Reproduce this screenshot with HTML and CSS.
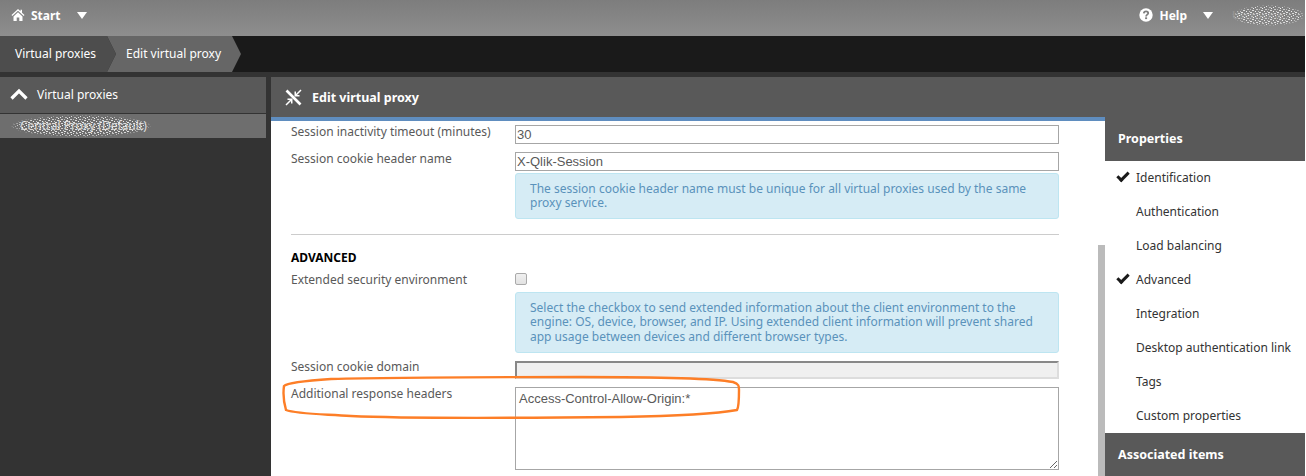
FILE: index.html
```html
<!DOCTYPE html>
<html lang="en">
<head>
  <meta charset="UTF-8">
  <title>Edit virtual proxy</title>
  <link rel="stylesheet" href="styles.css">
</head>
<body>
  <!-- top bar -->
  <header class="topbar">
    <div class="top-group">
      <svg class="home-icon" width="14" height="14" viewBox="0 0 14 14"><path fill="#fff" d="M7 1 0.5 7 1.3 7.9 7 2.7 12.7 7.9 13.5 7 11 4.7V1.8H9.5V3.3ZM2.5 8.4V13H5.7V9.4H8.3V13H11.5V8.4L7 4.3Z"/></svg>
      <span class="top-label">Start</span>
      <span class="caret caret-start"></span>
    </div>
    <div class="top-group">
      <svg class="help-icon" width="14" height="14" viewBox="0 0 14 14"><circle cx="7" cy="7" r="6.7" fill="#fff"/><path fill="none" stroke="#7f7f7f" stroke-width="1.8" d="M4.8 5.4C4.9 3.9 5.9 3.3 7 3.3 8.3 3.3 9.2 4.1 9.2 5.2 9.2 6.6 7.1 6.7 7.1 8.4"/><rect x="6.1" y="9.3" width="2" height="1.8" fill="#7f7f7f"/></svg>
      <span class="top-label">Help</span>
      <span class="caret caret-help"></span>
      <span class="user-name">
        Username
        <svg class="noise" width="73" height="21"><rect width="73" height="21" fill="url(#speckle)"/></svg>
      </span>
    </div>
  </header>

  <!-- breadcrumb -->
  <nav class="crumbs">
    <a class="crumb crumb-first">Virtual proxies</a>
    <a class="crumb crumb-current">Edit virtual proxy</a>
  </nav>

  <div class="workspace">
    <aside class="side-list">
      <div class="side-head">
        <svg width="18" height="12" viewBox="0 0 18 12"><path fill="none" stroke="#fff" stroke-width="3.2" d="M1.5 10.5 9 3 16.5 10.5"/></svg>
        <span>Virtual proxies</span>
      </div>
      <div class="side-item">
        Central Proxy (Default)
        <svg class="noise" width="142" height="22"><rect width="142" height="22" fill="url(#speckle)"/></svg>
      </div>
    </aside>

    <main class="editor">
      <div class="editor-head">
        <svg width="17" height="17" viewBox="0 0 17 17"><path fill="none" stroke="#fff" stroke-width="2.6" d="M1.5 1.5 15.5 15.5"/><path fill="none" stroke="#fff" stroke-width="1.5" d="M16 1 10.5 6.5M1 16 6.5 10.5"/><path fill="#fff" d="M9.5 2.5H11V6H14.5V7.5H9.5ZM2.5 9.5H7.5V14.5H6V11H2.5Z"/></svg>
        <span>Edit virtual proxy</span>
      </div>
      <div class="editor-body">
        <form class="form-pane">
          <div class="row">
            <label>Session inactivity timeout (minutes)</label>
            <input class="field" type="text" value="30">
          </div>
          <div class="row">
            <label>Session cookie header name</label>
            <div>
              <input class="field" type="text" value="X-Qlik-Session">
              <p class="info info-short">The session cookie header name must be unique for all virtual proxies used by the same proxy service.</p>
            </div>
          </div>
          <hr>
          <h3>ADVANCED</h3>
          <div class="row row-check">
            <label>Extended security environment</label>
            <div>
              <input class="check" type="checkbox">
              <p class="info info-long">Select the checkbox to send extended information about the client environment to the engine: OS, device, browser, and IP. Using extended client information will prevent shared app usage between devices and different browser types.</p>
            </div>
          </div>
          <div class="row row-domain">
            <label>Session cookie domain</label>
            <input class="field field-off" type="text" disabled>
          </div>
          <div class="row">
            <label>Additional response headers</label>
            <textarea class="field-area">Access-Control-Allow-Origin:*</textarea>
          </div>
        </form>

        <div class="scroll-track"><div class="scroll-thumb"></div></div>

        <div class="props">
          <div class="props-head">Properties</div>
          <ul class="props-list">
            <li class="done">Identification</li>
            <li>Authentication</li>
            <li>Load balancing</li>
            <li class="done">Advanced</li>
            <li>Integration</li>
            <li>Desktop authentication link</li>
            <li>Tags</li>
            <li>Custom properties</li>
          </ul>
          <div class="props-foot">Associated items</div>
        </div>
      </div>
    </main>
  </div>

  <!-- hand drawn marker round the headers row -->
  <svg class="marker" width="470" height="50" viewBox="0 0 470 50">
    <path fill="none" stroke="#fd7e27" stroke-width="2.4" d="M3 11C6 8 20 6 50 4 120 2 200 2 300 2 360 2 430 3 452 7 458 9 458 11 458 15 458 25 458 32 456 35 440 38 400 41 340 42 240 43 110 43 70 41 40 39 15 39 5 35 3 28 2 18 3 11Z"/>
  </svg>

  <!-- speckle used for the scrubbed names -->
  <svg class="defs" width="0" height="0">
    <defs>
      <pattern id="speckle" width="9" height="9" patternUnits="userSpaceOnUse">
        <rect x="0" y="0" width="1" height="1" fill="#ddd"/>
        <rect x="3" y="0" width="2" height="1" fill="#c4c4c4"/>
        <rect x="7" y="1" width="1" height="1" fill="#eee"/>
        <rect x="1" y="2" width="2" height="1" fill="#bbb"/>
        <rect x="5" y="2" width="1" height="1" fill="#e6e6e6"/>
        <rect x="3" y="3" width="1" height="1" fill="#f2f2f2"/>
        <rect x="6" y="4" width="2" height="1" fill="#ccc"/>
        <rect x="0" y="4" width="1" height="1" fill="#bbb"/>
        <rect x="2" y="5" width="2" height="1" fill="#ddd"/>
        <rect x="5" y="6" width="1" height="1" fill="#eee"/>
        <rect x="8" y="6" width="1" height="1" fill="#c4c4c4"/>
        <rect x="0" y="7" width="2" height="1" fill="#e6e6e6"/>
        <rect x="3" y="8" width="1" height="1" fill="#ccc"/>
        <rect x="6" y="8" width="2" height="1" fill="#ddd"/>
      </pattern>
    </defs>
  </svg>
</body>
</html>
```

FILE: styles.css
```css
/* page */
html, body { height: 476px; overflow: hidden; }
html { background: #fff; }
body { position: relative; width: 1305px; margin: 0; background: #333; color: #595959; font-family: "Noto Sans", "Liberation Sans", sans-serif; font-size: 12px; }
.noise { position: absolute; left: 0; top: 0; -webkit-mask-image: radial-gradient(closest-side, #000 85%, transparent 100%); mask-image: radial-gradient(closest-side, #000 85%, transparent 100%); }
.defs { position: absolute; }

/* top bar */
.topbar { display: flex; justify-content: space-between; align-items: center; height: 36px; padding: 0 0 6px 11px; background: linear-gradient(#7d7d7d, #8e8e8e); box-sizing: border-box; }
.top-group { display: flex; align-items: center; color: #fff; font-weight: 700; }
.top-label { font-size: 12px; }
.home-icon { margin-right: 6px; }
.help-icon { margin-right: 6px; }
.caret { width: 0; height: 0; border-left: 5px solid transparent; border-right: 5px solid transparent; border-top: 7px solid #fff; }
.caret-start { margin-left: 16px; }
.caret-help { margin-left: 16px; }
.user-name { position: relative; width: 73px; height: 21px; margin-left: 19px; line-height: 21px; color: rgba(255,255,255,0.15); font-size: 10px; overflow: hidden; }

/* breadcrumb */
.crumbs { display: flex; height: 36px; background: #1a1a1a; }
.crumb { display: flex; align-items: center; color: #fff; font-size: 12px; height: 36px; padding-bottom: 2px; box-sizing: border-box; }
.crumb-first { width: 116px; padding-left: 15px; background: #4d4d4d; clip-path: polygon(0 0, 107px 0, 116px 50%, 107px 100%, 0 100%); }
.crumb-current { width: 135px; margin-left: -9px; padding-left: 19px; background: #666; clip-path: polygon(0 0, 125px 0, 134px 50%, 125px 100%, 0 100%, 9px 50%); }

/* work area */
.workspace { display: flex; gap: 5px; height: 404px; padding-top: 5px; box-sizing: border-box; }
.side-list { width: 266px; flex: none; }
.side-head { display: flex; align-items: center; gap: 9px; height: 36px; padding: 0 0 2px 10px; background: #595959; color: #fff; font-size: 12px; box-sizing: border-box; }
.side-item { position: relative; height: 24px; margin-top: 1px; padding-left: 20px; background: #6e6e6e; color: #ddd; line-height: 24px; font-size: 12px; }
.side-item .noise { left: 10px; top: 1px; }
.editor { flex: 1; display: flex; flex-direction: column; min-width: 0; }
.editor-head { display: flex; align-items: center; gap: 10px; height: 40px; padding-left: 14px; background: #595959; color: #fff; font-weight: 700; font-size: 12.5px; box-sizing: border-box; }
.editor-body { flex: 1; display: flex; background: #fff; min-height: 0; }

/* form */
.form-pane { width: 827px; flex: none; padding: 4px 39px 0 20px; border-top: 4px solid #5f8dbf; box-sizing: border-box; }
.row { display: grid; grid-template-columns: 224px 544px; margin-bottom: 8px; }
.row label { line-height: 14px; font-size: 12px; }
.row-domain label { margin-top: -1px; }
.field { display: block; width: 544px; height: 19px; padding: 0 1px; border: 1px solid #a6a6a6; background: #fff; color: #595959; font-family: "Liberation Sans", sans-serif; font-size: 13px; box-sizing: border-box; }
.field-off { height: 18px; background: #f0f0f0; border-style: solid; border-width: 2px; border-color: #888 #ddd #ddd #888; }
.field-area { display: block; width: 544px; height: 83px; padding: 3px; border: 1px solid #a6a6a6; color: #595959; font-family: "Liberation Sans", sans-serif; font-size: 13px; resize: vertical; box-sizing: border-box; }
.check { display: block; appearance: none; width: 12px; height: 12px; margin: 0; border: 1px solid #aaa; border-radius: 2px; background: linear-gradient(#f0f0f0, #e2e2e2); }
.info { margin: 2px 0 0; padding: 7.5px 15px 7.5px 14px; background: #d6ecf5; border: 1px solid #bde5f1; border-radius: 3px; color: #5a92bb; font-size: 12px; line-height: 14.5px; }
.info-long { margin-top: 7px; }
.row-check { margin-bottom: 8px; }
.form-pane hr { height: 1px; margin: 15px 0 16px; border: 0; background: #ccc; }
.form-pane h3 { margin: 0 0 8px; color: #000; font-size: 12px; line-height: 14px; font-weight: 700; }

/* scrollbar beside the form */
.scroll-track { width: 7px; flex: none; border-top: 4px solid #5f8dbf; }
.scroll-thumb { height: 231px; margin-top: 124px; background: #bbb; }

/* properties */
.props { flex: 1; display: flex; flex-direction: column; }
.props-head { height: 44px; padding: 13px 0 0 13px; background: #595959; color: #fff; font-weight: 700; font-size: 12.5px; line-height: 18px; box-sizing: border-box; }
.props-list { flex: 1; margin: 0; padding: 0; list-style: none; color: #333; }
.props-list li { position: relative; height: 34px; padding-left: 31px; line-height: 34px; font-size: 12px; }
.props-list .done::before { content: ""; position: absolute; left: 12px; top: 11px; width: 9px; height: 4px; border-left: 3px solid #1a1a1a; border-bottom: 3px solid #1a1a1a; transform: rotate(-45deg); }
.props-foot { height: 43px; padding-left: 13px; background: #595959; color: #fff; font-weight: 700; font-size: 12.5px; line-height: 43px; box-sizing: border-box; }

/* orange marker */
.marker { position: absolute; left: 281px; top: 375px; }
```
